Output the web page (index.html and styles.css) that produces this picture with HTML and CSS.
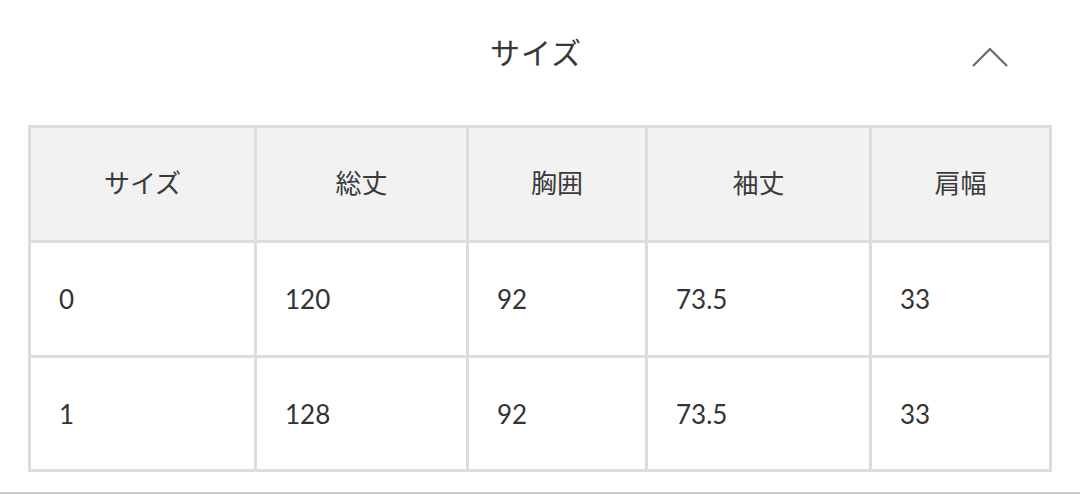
FILE: index.html
```html
<!DOCTYPE html>
<html lang="ja">
<head>
<meta charset="utf-8">
<link rel="stylesheet" href="styles.css">
</head>
<body>
<section class="panel">
  <header class="panel-head">
    <h2 class="panel-title">サイズ</h2>
    <span class="chevron" aria-hidden="true">
      <svg width="36" height="20" viewBox="0 0 36 20"><path d="M1 19 L18 2 L35 19" fill="none" stroke="#6b6b6b" stroke-width="2.2"/></svg>
    </span>
  </header>
  <table class="size-table">
    <colgroup>
      <col class="c1"><col class="c2"><col class="c3"><col class="c4"><col class="c5">
    </colgroup>
    <thead>
      <tr><th>サイズ</th><th>総丈</th><th>胸囲</th><th>袖丈</th><th>肩幅</th></tr>
    </thead>
    <tbody>
      <tr><td>0</td><td>120</td><td>92</td><td>73.5</td><td>33</td></tr>
      <tr><td>1</td><td>128</td><td>92</td><td>73.5</td><td>33</td></tr>
    </tbody>
  </table>
</section>
<div class="rule"></div>
</body>
</html>
```
FILE: styles.css
```css
html, body {
  margin: 0;
  padding: 0;
  background: #ffffff;
}
body {
  width: 1080px;
  height: 495px;
  overflow: hidden;
  font-family: Lato, "Noto Sans CJK JP", sans-serif;
  color: #333333;
}
.panel {
  padding: 0 28px 0 28px;
  height: 492px;
  box-sizing: border-box;
}
.panel-head {
  position: relative;
  height: 125px;
  display: flex;
  justify-content: center;
}
.panel-title {
  margin: 0 8px 0 0;
  padding-top: 31px;
  font-family: "Noto Sans CJK JP", sans-serif;
  font-weight: 400;
  font-size: 30px;
  line-height: 40px;
  color: #383838;
  letter-spacing: 1px;
}
.chevron {
  position: absolute;
  right: 44px;
  top: 47px;
  width: 36px;
  height: 20px;
}
.chevron svg { display: block; }
.size-table {
  border-collapse: separate;
  border-spacing: 0;
  border-top: 3px solid #dcdcdc;
  border-left: 3px solid #dcdcdc;
  table-layout: fixed;
  width: 1024px;
}
.c1 { width: 226px; }
.c2 { width: 212px; }
.c3 { width: 179px; }
.c4 { width: 224px; }
.c5 { width: 180px; }
.size-table th,
.size-table td {
  border-right: 3px solid #dcdcdc;
  border-bottom: 3px solid #dcdcdc;
  height: 112px;
  padding: 0;
  box-sizing: content-box;
  vertical-align: middle;
}
.size-table th {
  background: #f2f2f2;
  font-family: "Noto Sans CJK JP", sans-serif;
  font-weight: 400;
  font-size: 26px;
  text-align: center;
  color: #3a3a3a;
  padding-bottom: 6px;
  height: 106px;
}
.size-table td {
  font-family: Lato, sans-serif;
  font-size: 26px;
  text-align: left;
  padding-left: 28px;
  color: #333333;
}
.size-table tbody tr:last-child td {
  height: 111px;
}
.rule {
  height: 2px;
  background: #cccccc;
  width: 1080px;
}
```
